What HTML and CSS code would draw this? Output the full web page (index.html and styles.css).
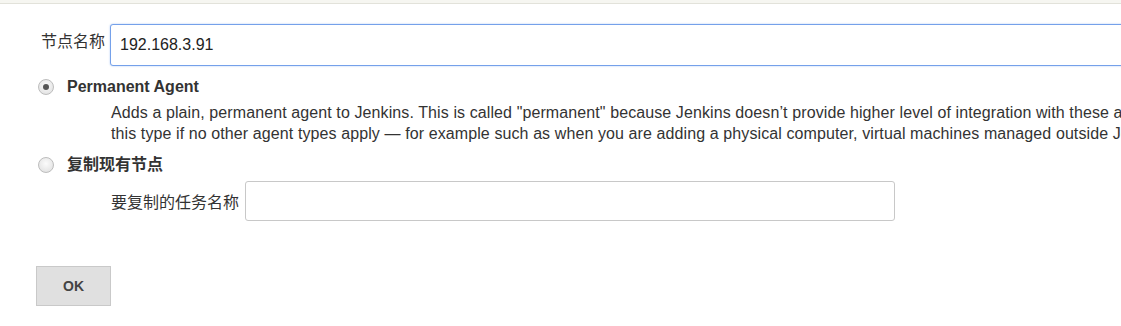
FILE: index.html
```html
<!DOCTYPE html>
<html lang="zh-CN">
  <head>
    <meta charset="UTF-8" />
    <meta name="viewport" content="width=device-width, initial-scale=1.0" />
    <title>新建节点</title>
    <link rel="stylesheet" href="styles.css">
  </head>
  <body>
    <div class="topbar"></div>
    <form class="new-node">
      <div class="name-row">
        <label class="name-label" for="name">节点名称</label>
        <input id="name" class="name-input" type="text" value="192.168.3.91" />
      </div>

      <label class="mode">
        <input type="radio" name="mode" checked />
        <span class="mode-title">Permanent Agent</span>
      </label>
      <div class="mode-desc">
        <div class="line">Adds a plain, permanent agent to Jenkins. This is called "permanent" because Jenkins doesn’t provide higher level of integration with these agents, such as dynamic provisioning. Select</div>
        <div class="line">this type if no other agent types apply — for example such as when you are adding a physical computer, virtual machines managed outside Jenkins, etc.</div>
      </div>

      <label class="mode">
        <input type="radio" name="mode" />
        <span class="mode-title">复制现有节点</span>
      </label>
      <div class="copy-row">
        <label for="from">要复制的任务名称</label>
        <input id="from" class="copy-input" type="text" />
      </div>

      <button type="button" class="ok">OK</button>
    </form>
  </body>
</html>
```

FILE: styles.css
```css
html,
body {
  margin: 0;
  padding: 0;
}

body {
  font-family: "Liberation Sans", Arial, "Noto Sans CJK SC", sans-serif;
  font-size: 16px;
  color: #333;
  background: #fff;
  overflow: hidden;
}

.topbar {
  height: 3px;
  background: #f6f6f1;
  border-bottom: 1px solid #e2e2da;
}

.new-node {
  padding-top: 20px;
}

.name-row {
  display: flex;
  align-items: flex-start;
  padding-left: 41px;
  gap: 5px;
}

.name-label {
  padding-top: 4px;
  white-space: nowrap;
}

.name-input {
  flex: none;
  width: 1100px;
  height: 42px;
  box-sizing: border-box;
  padding: 0 9px;
  border: 1px solid #75a1ea;
  border-radius: 3px;
  box-shadow: 0 0 2px #a9c5f2;
  font: inherit;
  color: #222;
  outline: none;
}

.mode {
  display: flex;
  align-items: center;
  gap: 13px;
  padding-left: 38px;
  margin-top: 10px;
  line-height: 21px;
}

.mode input {
  appearance: none;
  -webkit-appearance: none;
  margin: 0;
  width: 16px;
  height: 16px;
  border: 1px solid #bdbdbd;
  border-radius: 50%;
  background: radial-gradient(circle at 50% 40%, #fbfbfb 0, #e6e6e6 70%, #d6d6d6 100%);
  display: grid;
  place-items: center;
}

.mode input:checked::after {
  content: "";
  width: 6px;
  height: 6px;
  border-radius: 50%;
  background: #555;
}

.mode-title {
  font-weight: bold;
}

.mode-desc {
  padding-left: 111px;
  margin-top: 5px;
  line-height: 21px;
  letter-spacing: 0.1px;
  white-space: nowrap;
}

.copy-row {
  display: flex;
  align-items: center;
  gap: 6px;
  padding-left: 111px;
  margin-top: 6px;
}

.copy-input {
  width: 650px;
  height: 40px;
  box-sizing: border-box;
  border: 1px solid #c8c8c8;
  border-radius: 3px;
  font: inherit;
}

.ok {
  display: block;
  margin: 45px 0 0 36px;
  width: 75px;
  height: 40px;
  background: #e0e0e0;
  border: 1px solid #c9c9c9;
  border-radius: 0;
  font: bold 14px "Liberation Sans", Arial, sans-serif;
  color: #444;
}
```
